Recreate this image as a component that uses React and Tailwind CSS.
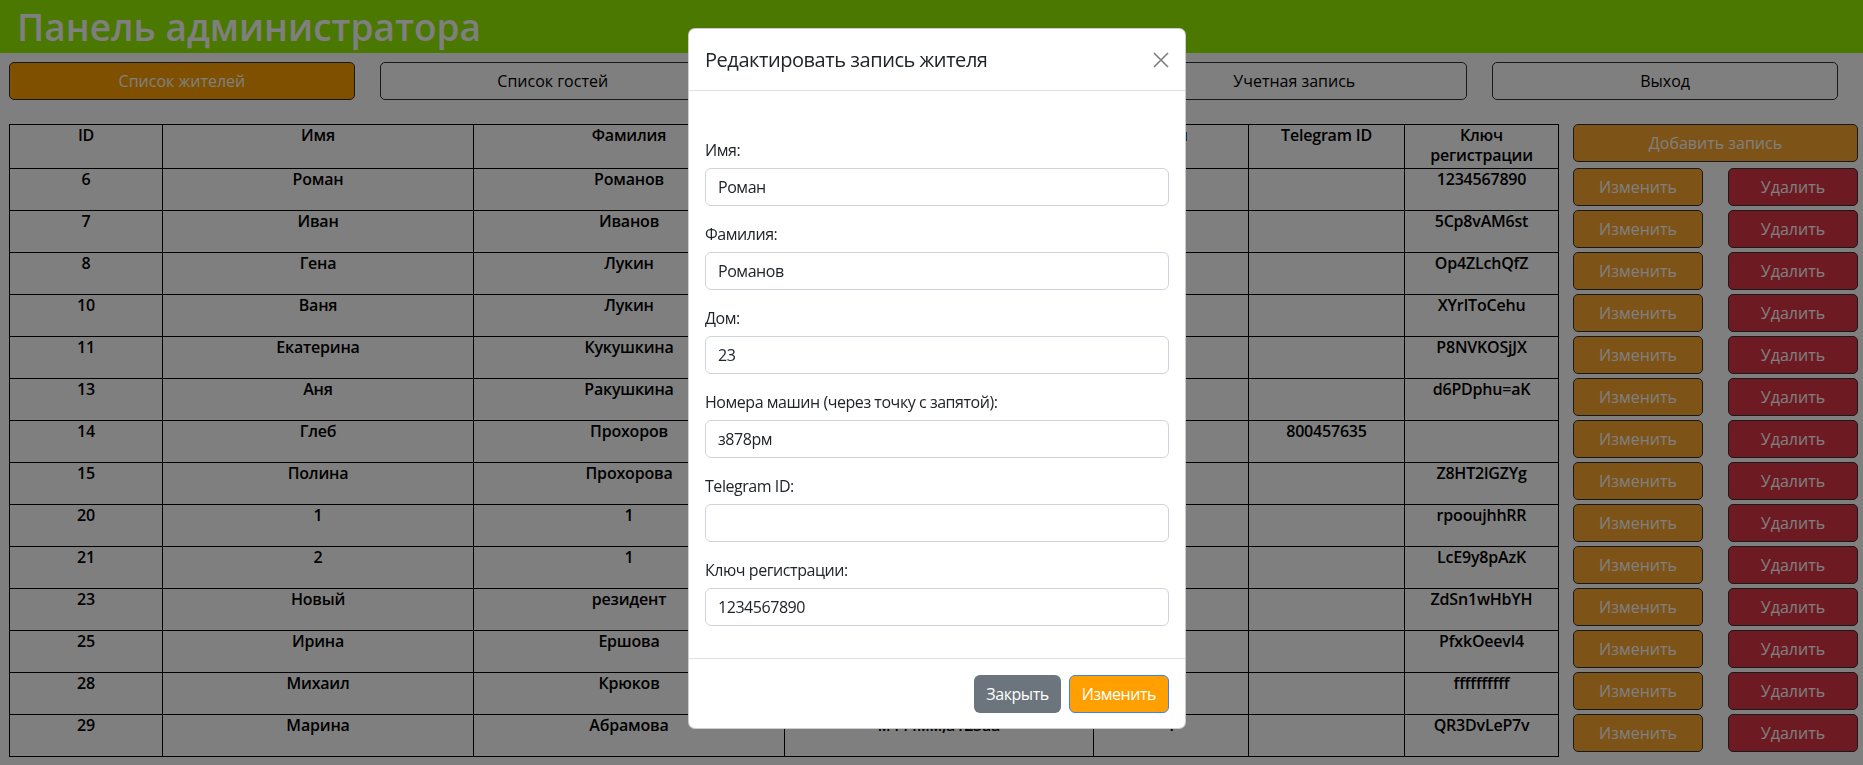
import { useState } from "react";

const NAV_ITEMS = ["Список жителей", "Список гостей", "Список машин", "Учетная запись", "Выход"];

const RESIDENTS = [
    { id: 6, name: "Роман", surname: "Романов", cars: "з878рм", house: "23", tg: "", key: "1234567890" },
    { id: 7, name: "Иван", surname: "Иванов", cars: "", house: "12", tg: "", key: "5Cp8vAM6st" },
    { id: 8, name: "Гена", surname: "Лукин", cars: "", house: "7", tg: "", key: "Op4ZLchQfZ" },
    { id: 10, name: "Ваня", surname: "Лукин", cars: "", house: "7", tg: "", key: "XYrIToCehu" },
    { id: 11, name: "Екатерина", surname: "Кукушкина", cars: "", house: "3", tg: "", key: "P8NVKOSjJX" },
    { id: 13, name: "Аня", surname: "Ракушкина", cars: "", house: "5", tg: "", key: "d6PDphu=aK" },
    { id: 14, name: "Глеб", surname: "Прохоров", cars: "", house: "9", tg: "800457635", key: "" },
    { id: 15, name: "Полина", surname: "Прохорова", cars: "", house: "9", tg: "", key: "Z8HT2lGZYg" },
    { id: 20, name: "1", surname: "1", cars: "", house: "1", tg: "", key: "rpooujhhRR" },
    { id: 21, name: "2", surname: "1", cars: "", house: "1", tg: "", key: "LcE9y8pAzK" },
    { id: 23, name: "Новый", surname: "резидент", cars: "", house: "2", tg: "", key: "ZdSn1wHbYH" },
    { id: 25, name: "Ирина", surname: "Ершова", cars: "", house: "4", tg: "", key: "PfxkOeevl4" },
    { id: 28, name: "Михаил", surname: "Крюков", cars: "", house: "6", tg: "", key: "ffffffffff" },
    { id: 29, name: "Марина", surname: "Абрамова", cars: "м444мм;а123аа", house: "1", tg: "", key: "QR3DvLeP7v" },
];

const FIELDS = [
    { label: "Имя:", key: "name" },
    { label: "Фамилия:", key: "surname" },
    { label: "Дом:", key: "house" },
    { label: "Номера машин (через точку с запятой):", key: "cars" },
    { label: "Telegram ID:", key: "tg" },
    { label: "Ключ регистрации:", key: "key" },
];

export default function App() {
    const [form, setForm] = useState(RESIDENTS[0]);

    return (
        <div className="relative min-h-screen bg-white font-['Open_Sans',sans-serif] text-black">
            <header className="h-[53px] bg-[#95f000] pl-[17px] flex items-center">
                <h1 className="text-[37px] font-semibold text-white leading-none">Панель администратора</h1>
            </header>

            <nav className="mt-[9px] ml-[9px] mr-[25px] flex gap-[25px]">
                {NAV_ITEMS.map((item, i) => (
                    <button
                        key={item}
                        className={`flex-1 h-[38px] rounded-[5px] border border-[#333] text-[16px] ${
                            i === 0 ? "bg-[#ffa000] text-white" : "bg-white text-black"
                        }`}
                    >
                        {item}
                    </button>
                ))}
            </nav>

            <div className="mt-[24px] ml-[9px] flex gap-[14px]">
                <table className="w-[1549px] table-fixed border-collapse text-[16px] font-semibold leading-[20px] tracking-[-0.2px]">
                    <colgroup>
                        <col className="w-[153px]" />
                        <col className="w-[311px]" />
                        <col className="w-[311px]" />
                        <col className="w-[309px]" />
                        <col className="w-[155px]" />
                        <col className="w-[156px]" />
                        <col className="w-[154px]" />
                    </colgroup>
                    <thead>
                        <tr className="h-[44px]">
                            {["ID", "Имя", "Фамилия", "Номера машин", "Дом", "Telegram ID", "Ключ регистрации"].map((h) => (
                                <th key={h} className="border border-black align-top font-semibold px-1">
                                    {h}
                                </th>
                            ))}
                        </tr>
                    </thead>
                    <tbody>
                        {RESIDENTS.map((r) => (
                            <tr key={r.id} className="h-[42px]">
                                <td className="border border-black align-top text-center">{r.id}</td>
                                <td className="border border-black align-top text-center">{r.name}</td>
                                <td className="border border-black align-top text-center">{r.surname}</td>
                                <td className="border border-black align-top text-center">{r.cars}</td>
                                <td className="border border-black align-top text-center">{r.house}</td>
                                <td className="border border-black align-top text-center">{r.tg}</td>
                                <td className="border border-black align-top text-center">{r.key}</td>
                            </tr>
                        ))}
                    </tbody>
                </table>

                <div className="w-[285px] flex flex-col">
                    <button className="h-[38px] mb-[6px] rounded-[5px] border border-[#333] bg-[#fca72f] text-white text-[16px]">
                        Добавить запись
                    </button>
                    {RESIDENTS.map((r) => (
                        <div key={r.id} className="h-[42px] grid grid-cols-2 gap-x-[25px]">
                            <button
                                onClick={() => setForm(r)}
                                className="h-[38px] rounded-[5px] border border-[#333] bg-[#fca72f] text-white text-[16px]"
                            >
                                Изменить
                            </button>
                            <button className="h-[38px] rounded-[5px] border border-[#333] bg-[#dc3545] text-white text-[16px]">
                                Удалить
                            </button>
                        </div>
                    ))}
                </div>
            </div>

            {/* backdrop */}
            <div className="fixed inset-0 bg-black/50" />

            {/* modal */}
            <div className="absolute top-[28px] left-[688px] w-[498px] bg-white rounded-[7px] border border-black/20 text-[#212529] tracking-[-0.45px]">
                <div className="h-[62px] px-4 flex items-center justify-between border-b border-[#dee2e6]">
                    <h5 className="text-[20px] font-medium leading-[30px]">Редактировать запись жителя</h5>
                    <button className="w-[16px] h-[16px] opacity-50">
                        <svg viewBox="0 0 16 16" className="w-[16px] h-[16px]" fill="none" stroke="#000" strokeWidth="1.6">
                            <path d="M1 1 L15 15 M15 1 L1 15" />
                        </svg>
                    </button>
                </div>

                <div className="px-4 pt-[47px] pb-4">
                    {FIELDS.map((f) => (
                        <div key={f.key} className="mb-4">
                            <label className="block mb-[6px] text-[16px] leading-[24px]">{f.label}</label>
                            <input
                                value={form[f.key]}
                                onChange={(e) => setForm({ ...form, [f.key]: e.target.value })}
                                className="block w-full h-[38px] px-3 border border-[#cfd4da] rounded-[6px] text-[16px] text-[#212529] outline-none"
                            />
                        </div>
                    ))}
                </div>

                <div className="h-[70px] border-t border-[#dee2e6] px-4 flex items-center justify-end gap-2">
                    <button className="h-[38px] px-3 rounded-[6px] bg-[#6c757d] text-white text-[16px]">Закрыть</button>
                    <button className="h-[38px] px-3 rounded-[6px] bg-[#ff9f00] border border-[#3b82f6] text-white text-[16px]">
                        Изменить
                    </button>
                </div>
            </div>
        </div>
    );
}
